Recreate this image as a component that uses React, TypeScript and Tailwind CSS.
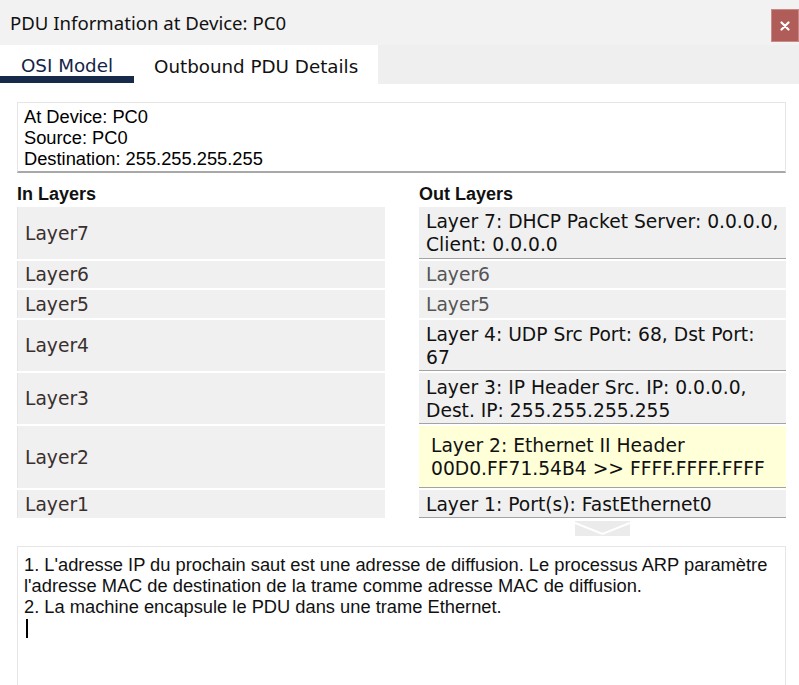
import React from "react";

const inLayers = [
  { label: "Layer7", h: "h-[52px]" },
  { label: "Layer6", h: "h-[27px]" },
  { label: "Layer5", h: "h-[28px]" },
  { label: "Layer4", h: "h-[51px]" },
  { label: "Layer3", h: "h-[51px]" },
  { label: "Layer2", h: "h-[62px]" },
  { label: "Layer1", h: "h-[28px]" },
];

const outLayers = [
  { text: ["Layer 7: DHCP Packet Server: 0.0.0.0,", "Client: 0.0.0.0"], h: "h-[52px]" },
  { text: ["Layer6"], h: "h-[27px]", muted: true },
  { text: ["Layer5"], h: "h-[28px]", muted: true },
  { text: ["Layer 4: UDP Src Port: 68, Dst Port:", "67"], h: "h-[51px]" },
  { text: ["Layer 3: IP Header Src. IP: 0.0.0.0,", "Dest. IP: 255.255.255.255"], h: "h-[51px]" },
  { text: ["Layer 2: Ethernet II Header", "00D0.FF71.54B4 >> FFFF.FFFF.FFFF"], h: "h-[62px]", active: true },
  { text: ["Layer 1: Port(s): FastEthernet0"], h: "h-[28px]" },
];

const verdana = "font-['DejaVu_Sans',Verdana,sans-serif]";
const arial = "font-['Liberation_Sans',Arial,sans-serif]";

export default function App() {
  return (
    <div className="relative h-[685px] w-[799px] overflow-hidden bg-white">
      {/* title bar */}
      <div className="flex h-[45px] items-start justify-between bg-[#f2f2f2]">
        <div className="pl-[10px] pt-[9px] font-['Noto_Sans',sans-serif] text-[18.6px] leading-[28px] text-[#111]">
          PDU Information at Device: PC0
        </div>
        <div className="mt-[9px] flex h-[33px] w-[28px] items-center justify-center border border-[#c98a87] bg-[#b05c58]">
          <svg width="10" height="10" viewBox="0 0 10 10">
            <path d="M1.5 1.5 L8.5 8.5 M8.5 1.5 L1.5 8.5" stroke="white" strokeWidth="2.2" strokeLinecap="round" />
          </svg>
        </div>
      </div>

      {/* tabs */}
      <div className="flex h-[39px]">
        <div className={`flex w-[378px] bg-white text-[18.3px] ${verdana}`}>
          <div className="flex h-[38px] w-[134px] items-center justify-center border-b-[7px] border-[#172a4a] pt-[11px] text-[#142447]">
            OSI Model
          </div>
          <div className="flex h-[38px] items-center pl-[20px] pt-[5px] text-[#111]">Outbound PDU Details</div>
        </div>
        <div className="flex-1 bg-[#efefef]" />
      </div>

      <div className="pl-[17px] pr-[13px]">
        {/* info box */}
        <div className={`mt-[18px] h-[71px] border border-b-2 border-[#e6e6e6] border-b-[#a8a8a8] px-[6px] pt-[3px] text-[18.3px] leading-[21px] text-black ${arial}`}>
          <div>At Device: PC0</div>
          <div>Source: PC0</div>
          <div>Destination: 255.255.255.255</div>
        </div>

        <div className="flex gap-[34px]">
          <div className="w-[368px]">
            <div className={`mt-[10px] text-[18px] font-bold leading-[22px] text-[#111] ${arial}`}>In Layers</div>
            {inLayers.map((l) => (
              <div
                key={l.label}
                className={`mt-[2px] flex ${l.h} items-center border-l border-[#e4e4e4] bg-[#f0f0f0] pl-[7px] pt-[2px] text-[18.7px] text-[#3a2f2f] ${verdana}`}
              >
                {l.label}
              </div>
            ))}
          </div>

          <div className="w-[367px]">
            <div className={`mt-[10px] text-[18px] font-bold leading-[22px] text-[#111] ${arial}`}>Out Layers</div>
            {outLayers.map((l, i) => (
              <div
                key={i}
                className={`mt-[2px] flex ${l.h} flex-col justify-center border-b border-[#a3a3a3] pt-[1px] text-[18.7px] leading-[23px] ${verdana} ${
                  l.active ? "bg-[#ffffd8] pl-[12px]" : "bg-[#f0f0f0] pl-[7px]"
                } ${l.muted ? "border-b-[#f0f0f0] text-[#555]" : "text-[#111]"}`}
              >
                {l.text.map((t) => (
                  <div key={t} className="whitespace-nowrap">
                    {t}
                  </div>
                ))}
              </div>
            ))}
            <div className="ml-[156px] mt-[3px]">
              <svg width="55" height="15" viewBox="0 0 55 15">
                <rect x="0" y="0" width="55" height="15" fill="#ebebeb" />
                <path d="M0 2 L27.5 13 L55 2" fill="none" stroke="white" strokeWidth="2" />
              </svg>
            </div>
          </div>
        </div>

        {/* notes */}
        <div className={`mt-[10px] h-[150px] border border-[#e6e6e6] px-[6px] pt-[7px] text-[18.3px] leading-[21px] text-[#111] ${arial}`}>
          <div className="whitespace-nowrap">
            1. L'adresse IP du prochain saut est une adresse de diffusion. Le processus ARP paramètre
          </div>
          <div className="whitespace-nowrap">l'adresse MAC de destination de la trame comme adresse MAC de diffusion.</div>
          <div className="whitespace-nowrap">2. La machine encapsule le PDU dans une trame Ethernet.</div>
          <div className="mt-[2px] ml-[2px] h-[19px] w-[2px] bg-black" />
        </div>
      </div>
    </div>
  );
}
